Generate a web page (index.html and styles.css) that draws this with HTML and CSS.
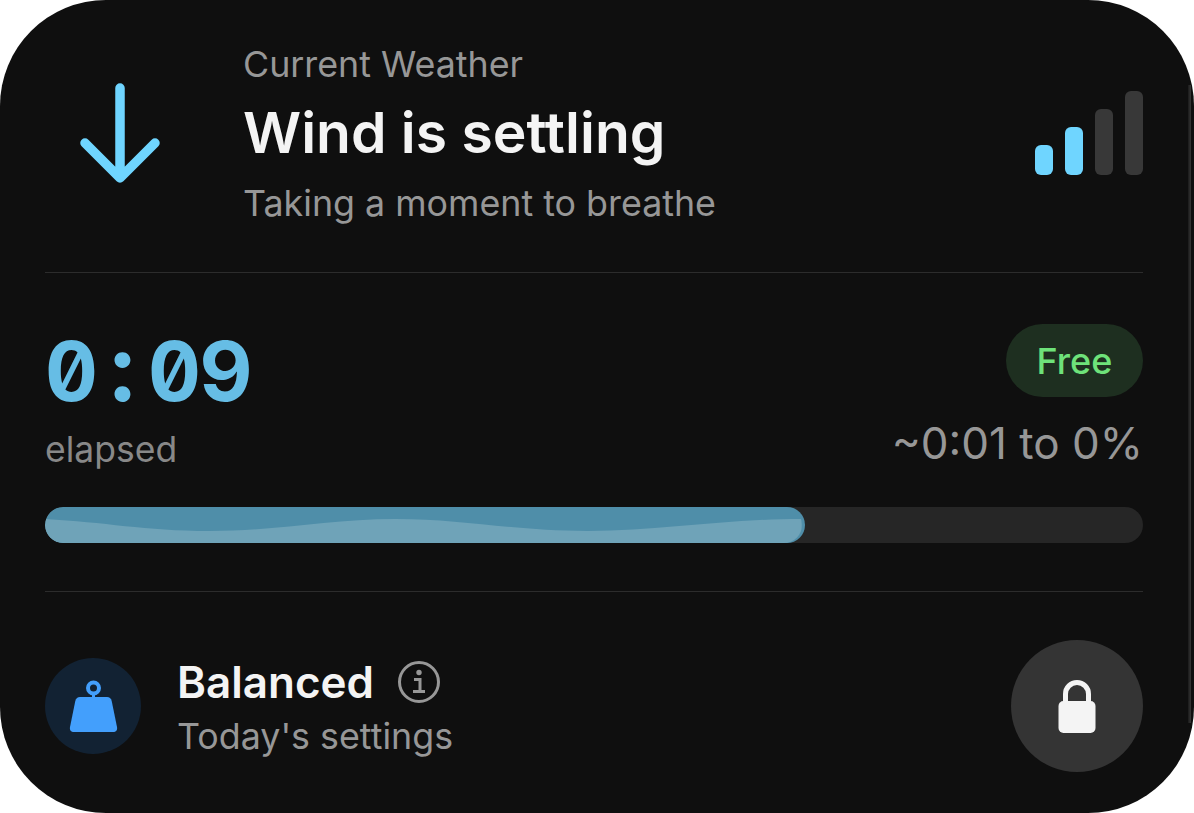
FILE: index.html
```html
<!DOCTYPE html>
<html>
<head>
    <title>Current Weather</title>
    <link rel="stylesheet" href="styles.css">
</head>
<body>
    <div class="card">
        <div class="weather">
            <svg class="arrow" width="80" height="100" viewBox="0 0 80 100">
                <path d="M40 5 V95 M5 60 L40 95 L75 60" fill="none" stroke="#6fd5ff" stroke-width="9.500" stroke-linecap="round" stroke-linejoin="round"/>
            </svg>
            <div class="weather-text">
                <div class="label">Current Weather</div>
                <div class="title">Wind is settling</div>
                <div class="label">Taking a moment to breathe</div>
            </div>
            <div class="bars">
                <span class="bar bar1 on"></span>
                <span class="bar bar2 on"></span>
                <span class="bar bar3"></span>
                <span class="bar bar4"></span>
            </div>
        </div>

        <div class="timer">
            <div class="timer-row">
                <div>
                    <div class="time"><span class="ch">0</span><span class="ch colon">:</span><span class="ch">0</span><span class="ch">9</span></div>
                    <div class="elapsed">elapsed</div>
                </div>
                <div class="timer-right">
                    <span class="badge">Free</span>
                    <div class="remain">~0:01 to 0%</div>
                </div>
            </div>
            <div class="track">
                <div class="fill" style="width: 69.2%">
                    <svg class="wave" viewBox="0 0 760 36" preserveAspectRatio="none">
                        <path d="M0 12 C60 15 100 24 165 24 C235 24 285 12 352 12 C420 12 470 24 545 24 C620 24 680 12 760 12 V36 H0 Z" fill="#6fa3b8"/>
                    </svg>
                </div>
            </div>
        </div>

        <div class="mode">
            <div class="mode-icon">
                <svg width="50" height="52" viewBox="0 0 50 52">
                    <circle cx="25.500" cy="8" r="5.500" fill="none" stroke="#439ffc" stroke-width="4"/>
                    <path d="M25.500 13 V18" stroke="#439ffc" stroke-width="3"/>
                    <path d="M12 17 H39 C41.500 17 43 18.500 43.700 21 L49 47 C49.600 50 48 52 45 52 H6 C3 52 1.400 50 2 47 L7.300 21 C8 18.500 9.500 17 12 17 Z" fill="#439ffc"/>
                </svg>
            </div>
            <div class="mode-text">
                <div class="mode-title">
                    Balanced
                    <svg class="info" width="44" height="44" viewBox="0 0 44 44">
                        <circle cx="22" cy="22" r="19.500" fill="none" stroke="#979797" stroke-width="3"/>
                        <circle cx="22" cy="12.500" r="2.700" fill="#979797"/>
                        <path d="M17 19.500 H23 V31 M16 31.500 H28" fill="none" stroke="#979797" stroke-width="3"/>
                    </svg>
                </div>
                <div class="label small">Today's settings</div>
            </div>
            <div class="lock">
                <svg width="38" height="54" viewBox="0 0 38 54">
                    <path d="M7.500 24 V15 A11.500 11.500 0 0 1 30.500 15 V24" fill="none" stroke="#f4f4f4" stroke-width="5"/>
                    <rect x="0.500" y="22" width="37" height="32" rx="5" fill="#f4f4f4"/>
                </svg>
            </div>
        </div>
    </div>
</body>
</html>
```

FILE: styles.css
```css
html, body {
    margin: 0;
    height: 100%;
    background-color: #ffffff;
}
body {
    font-family: Inter, "Liberation Sans", sans-serif;
    overflow: hidden;
}
.card {
    position: relative;
    width: 1194px;
    height: 813px;
    box-sizing: border-box;
    padding: 0 51px 0 45px;
    border-radius: 106px;
    background-color: #0f0f0f;
    display: flex;
    flex-direction: column;
}
/* thin light edge on the right side */
.card::after {
    content: "";
    position: absolute;
    top: 85px;
    bottom: 90px;
    right: 3px;
    width: 3px;
    background: linear-gradient(to right, #1a1a1a, #383838);
}

/* top part */
.weather {
    height: 273px;
    box-sizing: border-box;
    padding-bottom: 5px;
    border-bottom: 1px solid #2c2c2c;
    display: flex;
    align-items: center;
}
.arrow {
    margin-left: 35px;
    margin-right: 83px;
    margin-top: -1px;
    flex-shrink: 0;
}
.weather-text {
    flex: 1;
}
.label {
    font-size: 35.800px;
    line-height: 40px;
    color: #979797;
}
.title {
    font-size: 57px;
    font-weight: 600;
    line-height: 58px;
    margin: 20px 0 21px;
    color: #f4f4f4;
}
.bars {
    display: flex;
    align-items: flex-end;
    gap: 12px;
    margin-top: -2px;
}
.bar {
    width: 18px;
    border-radius: 6px;
    background-color: #383838;
}
.bar.on {
    background-color: #6fd5ff;
}
.bar1 { height: 30px; }
.bar2 { height: 48px; }
.bar3 { height: 66px; }
.bar4 { height: 84px; }

/* timer */
.timer {
    height: 319px;
    box-sizing: border-box;
    border-bottom: 1px solid #2c2c2c;
    padding-top: 51px;
}
.timer-row {
    display: flex;
    justify-content: space-between;
    height: 183px;
}
.time {
    font-size: 82px;
    font-weight: 700;
    line-height: 90px;
    margin-top: 3px;
    color: #66bde5;
    font-feature-settings: "zero", "tnum";
    white-space: nowrap;
}
.ch {
    display: inline-block;
    width: 51.500px;
    text-align: center;
}
.colon {
    font-size: 94px;
    line-height: 0;
}
.elapsed {
    font-size: 35.500px;
    line-height: 40px;
    margin-top: 13px;
    color: #888888;
}
.timer-right {
    display: flex;
    flex-direction: column;
    align-items: flex-end;
}
.badge {
    width: 137px;
    height: 73px;
    border-radius: 37px;
    background-color: #1e2f20;
    color: #6ee27a;
    font-size: 36px;
    font-weight: 500;
    display: flex;
    align-items: center;
    justify-content: center;
}
.remain {
    font-size: 44px;
    line-height: 50px;
    margin-top: 21px;
    color: #979797;
}
.track {
    height: 36px;
    border-radius: 18px;
    background-color: #262626;
    overflow: hidden;
}
.fill {
    height: 100%;
    border-radius: 18px;
    background-color: #4f8ea9;
    overflow: hidden;
}
.wave {
    display: block;
    width: calc(100% - 3px);
    height: 100%;
    border-radius: 0 18px 18px 0;
}

/* bottom part */
.mode {
    flex: 1;
    display: flex;
    align-items: center;
    padding-top: 7px;
}
.mode-icon {
    width: 96px;
    height: 96px;
    border-radius: 50%;
    background-color: #122233;
    display: flex;
    align-items: center;
    justify-content: center;
    margin-right: 36px;
}
.mode-text {
    flex: 1;
}
.mode-title {
    display: flex;
    align-items: center;
    gap: 23px;
    font-size: 44px;
    font-weight: 600;
    line-height: 50px;
    color: #f4f4f4;
}
.small {
    margin-top: 9px;
}
.lock {
    width: 132px;
    height: 132px;
    border-radius: 50%;
    background-color: #343434;
    display: flex;
    align-items: center;
    justify-content: center;
}
```
